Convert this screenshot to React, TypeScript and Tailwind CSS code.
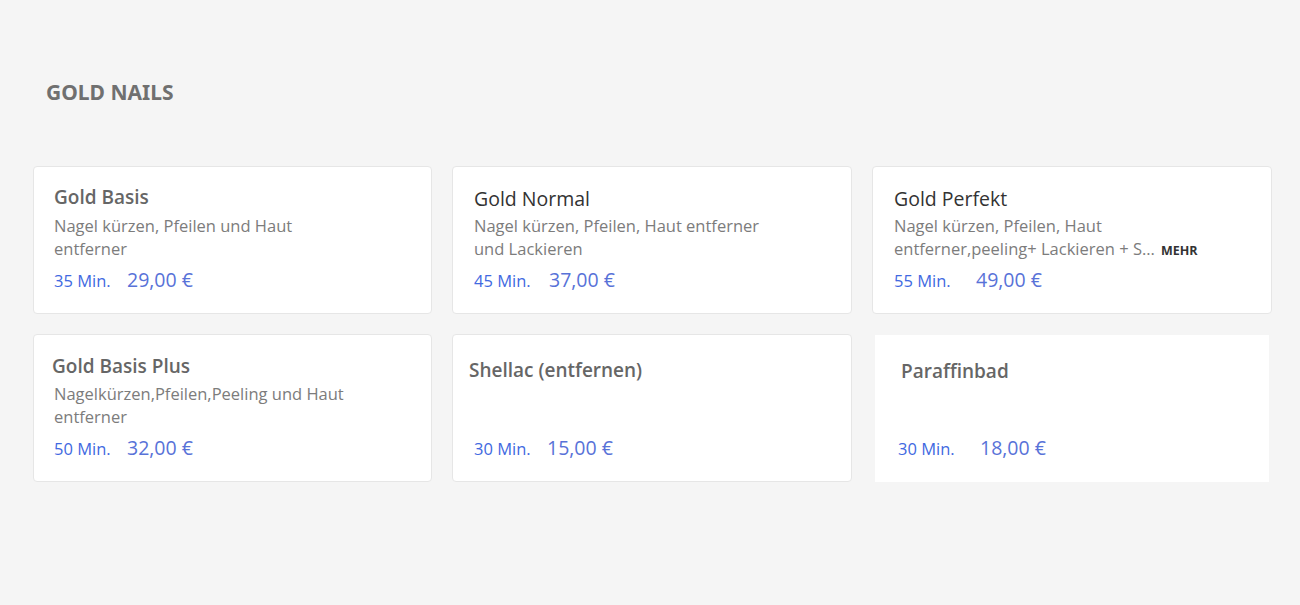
import React from "react";

type Service = {
  title: string;
  desc?: string;
  mehr?: boolean;
  min: string;
  price: string;
  offset: string;
  heading: string;
  pad: string;
  width: string;
  plain?: boolean;
};

const services: Service[] = [
  { title: "Gold Basis", desc: "Nagel kürzen, Pfeilen und Haut entferner", min: "35 Min.", price: "29,00 €", offset: "w-[73px]", heading: "font-semibold text-[19px] text-[#666] pt-0 leading-[26px]", pad: "pl-5", width: "w-[300px]" },
  { title: "Gold Normal", desc: "Nagel kürzen, Pfeilen, Haut entferner und Lackieren", min: "45 Min.", price: "37,00 €", offset: "w-[75px]", heading: "font-normal text-[19.5px] text-[#333] pt-[3px] leading-[23px]", pad: "pl-[21px]", width: "w-[300px]" },
  { title: "Gold Perfekt", desc: "Nagel kürzen, Pfeilen, Haut entferner,peeling+ Lackieren + S...", mehr: true, min: "55 Min.", price: "49,00 €", offset: "w-[82px]", heading: "font-normal text-[19.5px] text-[#333] pt-[3px] leading-[23px]", pad: "pl-[21px]", width: "w-[325px]" },
  { title: "Gold Basis Plus", desc: "Nagelkürzen,Pfeilen,Peeling und Haut entferner", min: "50 Min.", price: "32,00 €", offset: "w-[73px]", heading: "font-semibold text-[19px] text-[#666] pt-[3px] leading-[23px] -ml-[2px]", pad: "pl-5", width: "w-[300px]" },
  { title: "Shellac (entfernen)", min: "30 Min.", price: "15,00 €", offset: "w-[73px]", heading: "font-semibold text-[19px] text-[#666] pt-[10px] leading-[16px] -ml-[5px]", pad: "pl-[21px]", width: "w-[300px]" },
  { title: "Paraffinbad", min: "30 Min.", price: "18,00 €", offset: "w-[82px]", heading: "font-semibold text-[19px] text-[#666] pt-[12px] leading-[14px] ml-[3px]", pad: "pl-[23px]", width: "w-[300px]", plain: true },
];

function Card({ s }: { s: Service }) {
  return (
    <div
      className={
        s.plain
          ? "bg-white mx-[3px] mt-px pt-[17px] pr-4 " + s.pad
          : "bg-white border border-[#e6e6e6] rounded-[4px] pt-[17px] pr-4 " + s.pad
      }
    >
      <h3 className={s.heading}>{s.title}</h3>
      <div className={"mt-[4px] h-[46px] overflow-hidden text-[16.5px] leading-[23px] text-[#7c7c7c] " + s.width}>
        {s.desc}
        {s.mehr && <span className="ml-[6px] text-[12.5px] font-bold text-[#333]">MEHR</span>}
      </div>
      <div className="mt-[7px] flex items-baseline leading-[26px]">
        <span className={"inline-block text-[16.5px] text-[#4169e1] " + s.offset}>{s.min}</span>
        <span className="text-[19.5px] text-[#5872d8]">{s.price}</span>
      </div>
    </div>
  );
}

export default function App() {
  return (
    <div className="min-h-[605px] bg-[#f5f5f5] font-['Open_Sans','Noto_Sans',sans-serif]">
      <div className="pl-[33px] pt-[77px]">
        <h1 className="pl-[13px] text-[21px] leading-[30px] font-bold text-[#707070] font-['Noto_Sans','Open_Sans',sans-serif]">
          GOLD NAILS
        </h1>
        <div className="mt-[59px] grid grid-cols-[399px_400px_400px] gap-x-[20px] gap-y-[20px] auto-rows-[148px]">
          {services.map((s) => (
            <Card key={s.title} s={s} />
          ))}
        </div>
      </div>
    </div>
  );
}
